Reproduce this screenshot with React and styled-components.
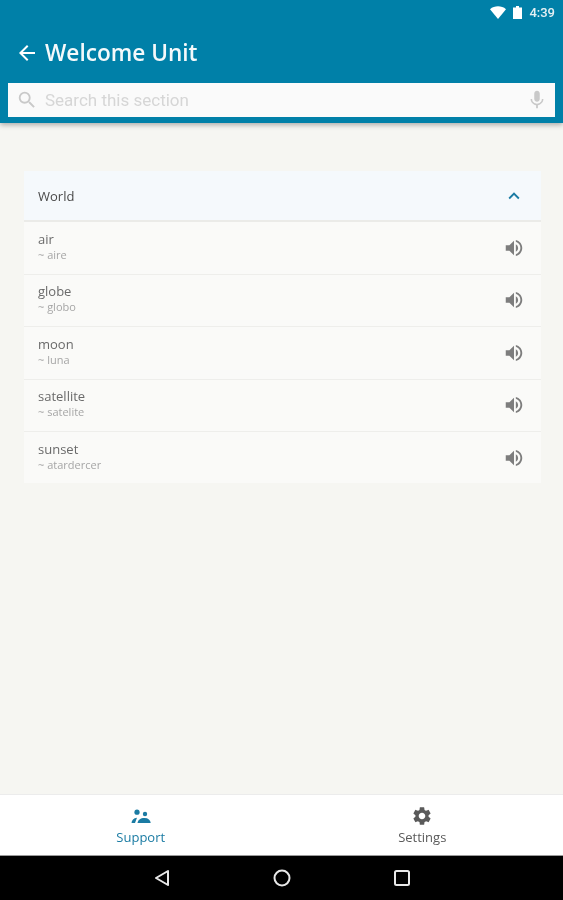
import React from "react";
import styled, { createGlobalStyle } from "styled-components";
import { MdArrowBack, MdSearch, MdMic, MdKeyboardArrowUp, MdVolumeUp, MdSettings } from "react-icons/md";

const GlobalStyle = createGlobalStyle`
  html, body { margin: 0; padding: 0; }
  body { font-family: "Open Sans", "Noto Sans", sans-serif; background: #f6f6f2; }
`;

const Screen = styled.div`
  width: 563px;
  height: 900px;
  display: flex;
  flex-direction: column;
  overflow: hidden;
  background: #f6f6f2;
  filter: blur(0.5px);
`;

const Header = styled.header`
  height: 123px;
  flex: none;
  background: #0080a8;
  box-shadow: 0 2px 5px rgba(0, 0, 0, 0.3);
  display: flex;
  flex-direction: column;
  padding: 0 8px;
  box-sizing: border-box;
  position: relative;
`;

const StatusBar = styled.div`
  height: 25px;
  display: flex;
  align-items: center;
  justify-content: flex-end;
  gap: 7px;
  color: #fff;
`;

const Clock = styled.span`
  font-family: "Roboto", sans-serif;
  font-size: 13px;
  font-weight: 500;
  color: #e4f0f4;
`;

const TitleRow = styled.div`
  height: 58px;
  display: flex;
  align-items: center;
  gap: 6px;
  padding-left: 7px;
  padding-bottom: 3px;
  box-sizing: border-box;
  color: #fff;
`;

const Title = styled.h1`
  margin: 0;
  font-size: 22.6px;
  font-weight: 600;
  color: #f4f9fb;
`;

const SearchBar = styled.div`
  height: 34px;
  background: #fafafa;
  display: flex;
  align-items: center;
  padding: 0 7px 0 8px;
  color: #c9c9c9;
`;

const SearchText = styled.span`
  flex: 1;
  margin-left: 7px;
  font-family: "Roboto", sans-serif;
  font-size: 17px;
  color: #d6d6d6;
`;

const Content = styled.main`
  flex: 1;
  padding: 48px 22px 0 24px;
`;

const Card = styled.section`
  height: 312px;
  overflow: hidden;
  background: #fafaf8;
`;

const CardHead = styled.div`
  height: 49px;
  padding: 0 16px 0 14px;
  display: flex;
  align-items: center;
  justify-content: space-between;
  background: #f5f9fc;
  border-bottom: 2px solid #ebebe8;
`;

const CardTitle = styled.span`
  font-size: 13px;
  color: #4a4a4a;
`;

const Row = styled.div`
  height: 51.5px;
  padding: 0 16px 0 14px;
  display: flex;
  align-items: center;
  justify-content: space-between;
  border-bottom: 1px solid ${(p) => (p.$last ? "transparent" : "#eeeeeb")};
`;

const Words = styled.div`
  display: flex;
  flex-direction: column;
  padding-bottom: 3px;
`;

const Word = styled.span`
  font-size: 13px;
  line-height: 16px;
  color: #6a6a6a;
`;

const Translation = styled.span`
  font-size: 11px;
  line-height: 15px;
  color: #a6a6a6;
`;

const SoundIcon = styled(MdVolumeUp)`
  color: #7d7d7d;
`;

const BottomNav = styled.nav`
  height: 60px;
  flex: none;
  background: #fff;
  border-top: 1px solid #ececec;
  display: grid;
  grid-template-columns: 1fr 1fr;
`;

const NavItem = styled.div`
  display: flex;
  flex-direction: column;
  align-items: center;
  padding-top: 10px;
  color: ${(p) => (p.$active ? "#1a7ba3" : "#5a5a5a")};
`;

const NavIcon = styled.div`
  height: 22px;
  display: flex;
  align-items: center;
`;

const NavLabel = styled.span`
  font-size: 13px;
  line-height: 18px;
  margin-top: 1px;
`;

const SystemBar = styled.div`
  height: 45px;
  flex: none;
  background: #000;
  border-top: 1px solid #9a9a9a;
  box-sizing: border-box;
  display: flex;
  align-items: center;
  justify-content: center;
  gap: 103px;
`;

const words = [
  ["air", "~ aire"],
  ["globe", "~ globo"],
  ["moon", "~ luna"],
  ["satellite", "~ satelite"],
  ["sunset", "~ atardercer"],
];

const PeopleIcon = () => (
  <svg width="20" height="16" viewBox="0 -1 20 16" fill="currentColor">
    <circle cx="6" cy="3.2" r="2.600" />
    <circle cx="14" cy="5" r="2.200" />
    <path d="M0.500 14c.2-2.800 2-4.800 5.500-5.200L4 14z" />
    <path d="M6.500 14c.4-3 3-5 6.900-5s6 2 6.300 5z" />
  </svg>
);

const Wifi = () => (
  <svg width="16" height="13" viewBox="0 0 16 13" fill="#fff">
    <path d="M0 3.200C4.500 -.6 11.500 -.6 16 3.200L8 13z" />
  </svg>
);

const Battery = () => (
  <svg width="9" height="13" viewBox="0 0 9 13" fill="#fff">
    <path d="M3 0h3v1.500h3V13H0V1.500h3z" />
  </svg>
);

const App = () => {
  return (
    <>
      <GlobalStyle />
      <Screen>
        <Header>
          <StatusBar>
            <Wifi />
            <Battery />
            <Clock>4:39</Clock>
          </StatusBar>
          <TitleRow>
            <MdArrowBack size={24} />
            <Title>Welcome Unit</Title>
          </TitleRow>
          <SearchBar>
            <MdSearch size={22} />
            <SearchText>Search this section</SearchText>
            <MdMic size={22} />
          </SearchBar>
        </Header>
        <Content>
          <Card>
            <CardHead>
              <CardTitle>World</CardTitle>
              <MdKeyboardArrowUp size={22} color="#1a7ba3" />
            </CardHead>
            {words.map(([w, t], i) => (
              <Row key={w} $last={i === words.length - 1}>
                <Words>
                  <Word>{w}</Word>
                  <Translation>{t}</Translation>
                </Words>
                <SoundIcon size={22} />
              </Row>
            ))}
          </Card>
        </Content>
        <BottomNav>
          <NavItem $active>
            <NavIcon><PeopleIcon /></NavIcon>
            <NavLabel>Support</NavLabel>
          </NavItem>
          <NavItem>
            <NavIcon><MdSettings size={22} /></NavIcon>
            <NavLabel>Settings</NavLabel>
          </NavItem>
        </BottomNav>
        <SystemBar>
          <svg width="16" height="18" viewBox="0 0 16 18" fill="none" stroke="#e8e8e8" strokeWidth="2">
            <path d="M14 2L2 9l12 7z" strokeLinejoin="round" />
          </svg>
          <svg width="18" height="18" viewBox="0 0 18 18" fill="none" stroke="#e8e8e8" strokeWidth="2">
            <circle cx="9" cy="9" r="7.500" />
          </svg>
          <svg width="16" height="16" viewBox="0 0 16 16" fill="none" stroke="#e8e8e8" strokeWidth="2">
            <rect x="1" y="1" width="14" height="14" rx="1.500" />
          </svg>
        </SystemBar>
      </Screen>
    </>
  );
};

export default App;
